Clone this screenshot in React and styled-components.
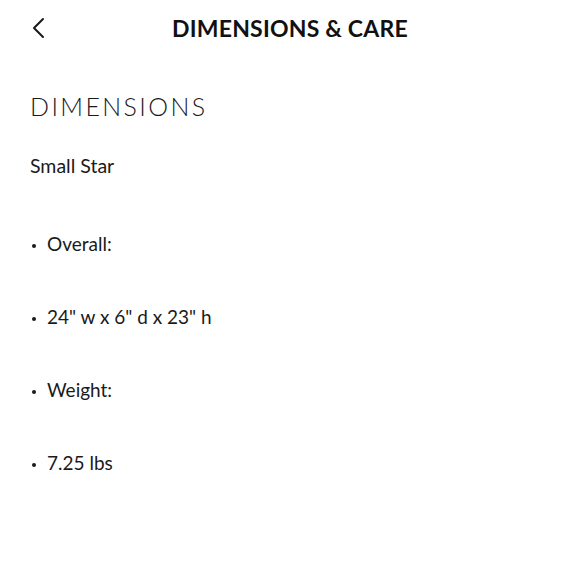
import styled, { createGlobalStyle } from 'styled-components'

const Global = createGlobalStyle`
   body {
      margin: 0;
      background: #fff;
      font-family: Lato, "Noto Sans", sans-serif;
      color: #1a1a1a;
   }
`

const Page = styled.div`
   width: 580px;
   height: 580px;
   overflow: hidden;
`
const Header = styled.div`
   display: grid;
   grid-template-columns: 60px 1fr 60px;
   align-items: center;
   height: 56px;
   padding: 0 20px;
`
const Back = styled.button`
   border: none;
   background: none;
   padding: 0;
   width: 24px;
   height: 24px;
   display: flex;
   align-items: center;
   justify-content: center;
   margin-left: 6px;
   color: #1a1a1a;
`
const Title = styled.h1`
   margin: 0;
   text-align: center;
   font-size: 23px;
   font-weight: 700;
   letter-spacing: 0.2px;
   color: #111;
`
const Content = styled.div`
   padding: 34px 30px 0;
`
const Heading = styled.h2`
   margin: 0;
   font-size: 25px;
   font-weight: 300;
   letter-spacing: 2.4px;
   line-height: 32px;
`
const Sub = styled.div`
   margin-top: 32px;
   font-size: 19.5px;
   line-height: 24px;
`
const List = styled.ul`
   list-style: none;
   margin: 54px 0 0;
   padding: 0;
   display: flex;
   flex-direction: column;
   gap: 49px;
`
const Item = styled.li`
   display: flex;
   align-items: center;
   font-size: 19px;
   line-height: 24px;

   &::before {
      content: '';
      flex: none;
      width: 4px;
      height: 4px;
      border-radius: 50%;
      background: #1a1a1a;
      margin: 3px 11px 0 2px;
   }
`

const items = ['Overall:', '24" w x 6" d x 23" h', 'Weight:', '7.25 lbs']

export default function App() {
   return (
      <Page>
         <Global />
         <Header>
            <Back aria-label="Back">
               <svg width="14" height="22" viewBox="0 0 14 22" fill="none">
                  <path d="M12 2 L3 11 L12 20" stroke="#1a1a1a" strokeWidth="2" strokeLinecap="round" strokeLinejoin="round" />
               </svg>
            </Back>
            <Title>DIMENSIONS &amp; CARE</Title>
            <div />
         </Header>
         <Content>
            <Heading>DIMENSIONS</Heading>
            <Sub>Small Star</Sub>
            <List>
               {items.map(el => <Item key={el}>{el}</Item>)}
            </List>
         </Content>
      </Page>
   )
}
